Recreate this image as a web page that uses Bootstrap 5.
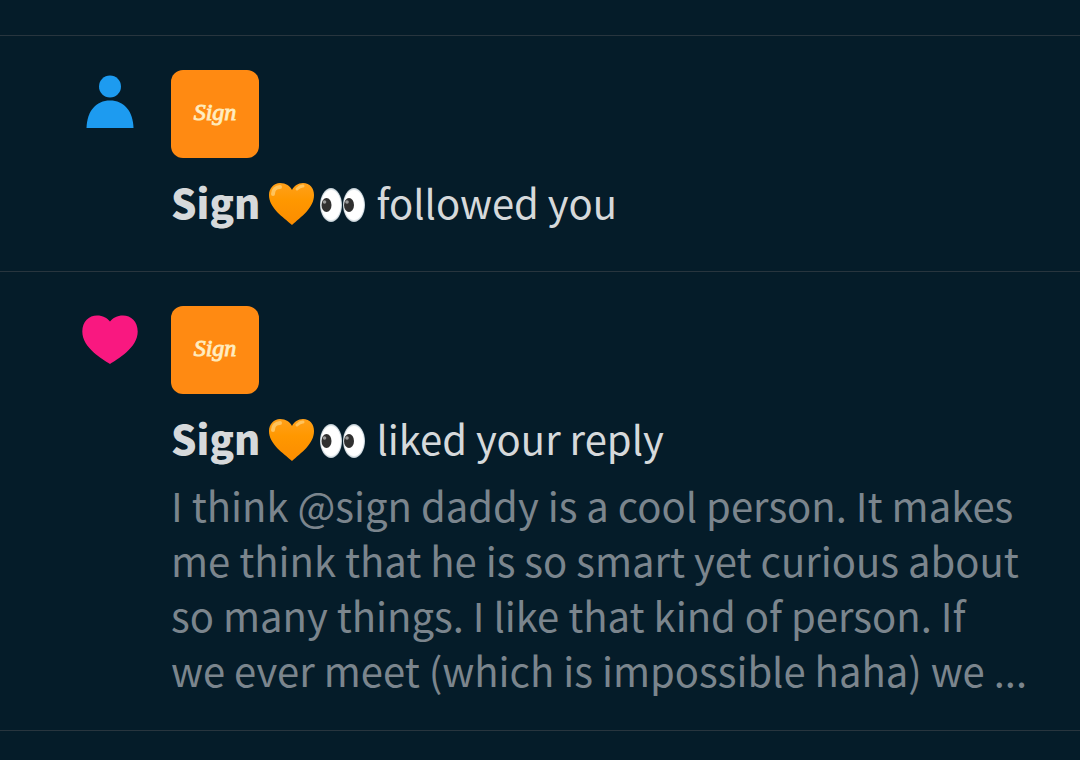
<!DOCTYPE html>
<html lang="en" data-bs-theme="dark">
<head>
<meta charset="utf-8">
<meta name="viewport" content="width=device-width, initial-scale=1">
<title>Notifications</title>
<link rel="stylesheet" href="https://cdn.jsdelivr.net/npm/bootstrap@5.3.0/dist/css/bootstrap.min.css">
<style>
  body {
    background: #051c29;
    color: #d6d9db;
    font-family: "Noto Sans CJK SC", "Noto Sans", sans-serif;
    font-size: 40px;
    line-height: 55px;
  }
  .feed { padding-top: 35px; }
  .notice { border-top: 1px solid #28353e; padding: 34px 40px 41px 80px; gap: 31px; }
  .notice:last-child { border-bottom: 1px solid #28353e; padding-bottom: 32px; }
  .kind-icon { width: 60px; height: 60px; }
  .avatar {
    width: 88px; height: 88px; border-radius: 12px; padding-bottom: 4px;
    background: #ff8a12; color: #fff3cf;
    font: italic 24px/28px "Liberation Serif", serif;
    -webkit-text-stroke: 1px #ffe9b8;
  }
  .headline { margin-top: 17px; }
  .person { color: inherit; font-weight: 900; }
  .emoji { width: 47px; height: 47px; margin-top: 4px; }
  .action { margin-left: 10px; }
  .reply { color: #7b858d; margin-top: 12px; }
</style>
</head>
<body>
<svg class="position-absolute" width="0" height="0" aria-hidden="true">
  <defs>
    <linearGradient id="heartFill" x1="0" y1="0" x2="0" y2="1">
      <stop offset="0" stop-color="#ffa01a"/><stop offset=".4" stop-color="#ff9800"/><stop offset="1" stop-color="#fb8c00"/>
    </linearGradient>
    <radialGradient id="eyeFill"><stop offset=".85" stop-color="#fff"/><stop offset="1" stop-color="#b5c3cb"/></radialGradient>
    <symbol id="orangeHeart" viewBox="0 0 47 47">
      <path fill="url(#heartFill)" d="M24 44C15 36 1 27 1 14 1 7 6 2 12 2c6 0 10 3 12 7 2-4 6-7 11-7 7 0 11 5 11 12 0 13-13 22-22 30Z"/>
      <path d="M5 13c0-4 3-7 7-7" fill="none" stroke="#ffc35c" stroke-width="4" stroke-linecap="round"/>
      <path d="M29 8c2-2 4-3 6-3" fill="none" stroke="#ffc35c" stroke-width="3" stroke-linecap="round"/>
    </symbol>
    <symbol id="eyes" viewBox="0 0 47 47">
      <g fill="url(#eyeFill)"><path fill="url(#eyeFill)" d="M12 7C18 7 23 15 23 24S18 41 12 41 1 33 1 24 6 7 12 7Z"/><path fill="url(#eyeFill)" d="M35 7C41 7 46 15 46 24S41 41 35 41 24 33 24 24 29 7 35 7Z"/></g>
      <g fill="#303030"><ellipse cx="7.500" cy="24" rx="5" ry="7"/><ellipse cx="30" cy="24" rx="5" ry="7"/></g>
      <g fill="#999"><circle cx="5.500" cy="21" r="1.800"/><circle cx="28" cy="21" r="1.800"/></g>
    </symbol>
  </defs>
</svg>
<main class="feed">
  <article class="notice d-flex align-items-start">
    <svg class="kind-icon flex-shrink-0" viewBox="0 0 60 60" fill="#1d9bf0" role="img" aria-label="New follower">
      <circle cx="30" cy="16.500" r="11"/><path d="M6.500 58C7 41 16 30.500 30 30.500S53 41 53.500 58Z"/>
    </svg>
    <div class="flex-grow-1">
      <a href="#" class="avatar d-flex align-items-center justify-content-center text-decoration-none">Sign</a>
      <div class="headline d-flex align-items-center">
        <a href="#" class="person text-decoration-none">Sign</a>
        <svg class="emoji ms-2" role="img" aria-label="orange heart"><use href="#orangeHeart"/></svg>
        <svg class="emoji ms-1" role="img" aria-label="eyes"><use href="#eyes"/></svg>
        <span class="action">followed you</span>
      </div>
    </div>
  </article>
  <article class="notice d-flex align-items-start">
    <svg class="kind-icon flex-shrink-0" viewBox="0 0 60 60" fill="#f91880" role="img" aria-label="Like">
      <path d="M30 58C23 53.500 2.300 42 2.300 25.500 2.300 15.500 9 9.500 17 9.500c6 0 10 2.500 13 6 3-3.500 7-6 13-6 8 0 14.700 6 14.700 16C57.700 42 37 53.500 30 58Z"/>
    </svg>
    <div class="flex-grow-1">
      <a href="#" class="avatar d-flex align-items-center justify-content-center text-decoration-none">Sign</a>
      <div class="headline d-flex align-items-center">
        <a href="#" class="person text-decoration-none">Sign</a>
        <svg class="emoji ms-2" role="img" aria-label="orange heart"><use href="#orangeHeart"/></svg>
        <svg class="emoji ms-1" role="img" aria-label="eyes"><use href="#eyes"/></svg>
        <span class="action">liked your reply</span>
      </div>
      <p class="reply mb-0">I think @sign daddy is a cool person. It makes<br>me think that he is so smart yet curious about<br>so many things. I like that kind of person. If<br>we ever meet (which is impossible haha) we ...</p>
    </div>
  </article>
</main>
<script src="https://cdn.jsdelivr.net/npm/bootstrap@5.3.0/dist/js/bootstrap.bundle.min.js"></script>
</body>
</html>
